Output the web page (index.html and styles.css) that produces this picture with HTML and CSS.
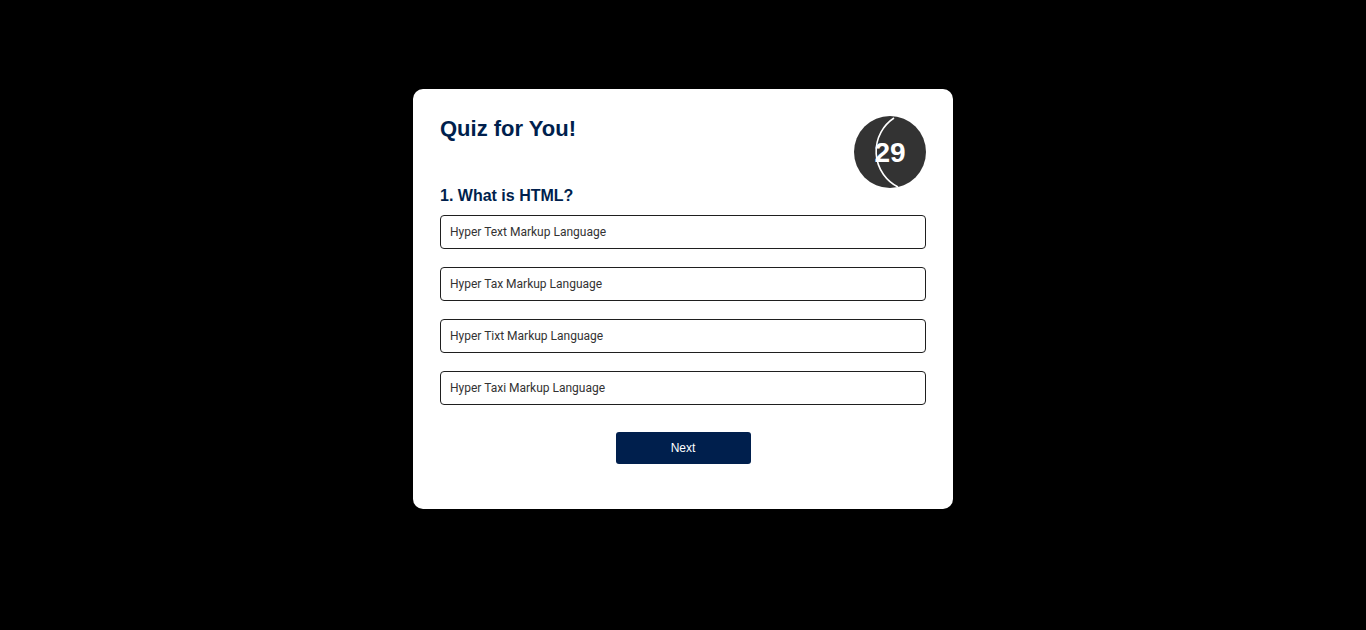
FILE: index.html
```html
<!DOCTYPE html>
<html lang="en">
<head>
<meta charset="utf-8">
<title>Quiz for You!</title>
<link rel="stylesheet" href="styles.css">
</head>
<body>
<main class="page">
  <section class="card">
    <header class="card-head">
      <h1 class="title">Quiz for You!</h1>
      <div class="timer">
        <svg class="timer-art" width="72" height="72" viewBox="0 0 72 72" aria-hidden="true">
          <circle cx="36" cy="36" r="36" fill="#333333"/>
          <path d="M40 2 A40 40 0 0 0 44 71" fill="none" stroke="#ffffff" stroke-width="1.6"/>
        </svg>
        <span class="timer-num">29</span>
      </div>
    </header>
    <h2 class="question">1. What is HTML?</h2>
    <ul class="options">
      <li class="option">Hyper Text Markup Language</li>
      <li class="option">Hyper Tax Markup Language</li>
      <li class="option">Hyper Tixt Markup Language</li>
      <li class="option">Hyper Taxi Markup Language</li>
    </ul>
    <div class="actions">
      <button class="next-btn" type="button">Next</button>
    </div>
  </section>
</main>
</body>
</html>
```

FILE: styles.css
```css
* { box-sizing: border-box; }

html, body {
  margin: 0;
  padding: 0;
  background: #000000;
  height: 100%;
}

.page {
  display: flex;
  justify-content: center;
  padding-top: 89px;
}

.card {
  width: 540px;
  height: 420px;
  background: #ffffff;
  border-radius: 10px;
  padding: 27px 27px 45px;
  display: flex;
  flex-direction: column;
}

.card-head {
  display: flex;
  justify-content: space-between;
  align-items: flex-start;
}

.title {
  margin: 2px 0 0;
  font-family: "Liberation Sans", Arial, sans-serif;
  font-weight: 700;
  font-size: 22px;
  line-height: 22px;
  color: #001f4d;
}

.timer {
  position: relative;
  width: 72px;
  height: 72px;
  display: flex;
  align-items: center;
  justify-content: center;
}

.timer-art {
  position: absolute;
  left: 0;
  top: 0;
}

.timer-num {
  position: relative;
  top: 1px;
  font-family: "Liberation Sans", Arial, sans-serif;
  font-weight: 700;
  font-size: 28px;
  line-height: 32px;
  color: #ffffff;
}

.question {
  margin: -1px 0 0;
  font-family: "Liberation Sans", Arial, sans-serif;
  font-weight: 700;
  font-size: 16px;
  line-height: 18px;
  color: #001f4d;
}

.options {
  list-style: none;
  margin: 10px 0 0;
  padding: 0;
  display: flex;
  flex-direction: column;
  gap: 18px;
}

.option {
  height: 34px;
  border: 1px solid #1f1f1f;
  border-radius: 4px;
  padding: 0 9px;
  display: flex;
  align-items: center;
  font-family: Roboto, "Liberation Sans", Arial, sans-serif;
  font-size: 12px;
  color: #333333;
}

.actions {
  display: flex;
  justify-content: center;
  margin-top: 27px;
}

.next-btn {
  width: 135px;
  height: 32px;
  border: 0;
  border-radius: 3px;
  background: #001f4d;
  color: #ffffff;
  font-family: "Liberation Sans", Arial, sans-serif;
  font-size: 12px;
  padding: 0;
}
```
